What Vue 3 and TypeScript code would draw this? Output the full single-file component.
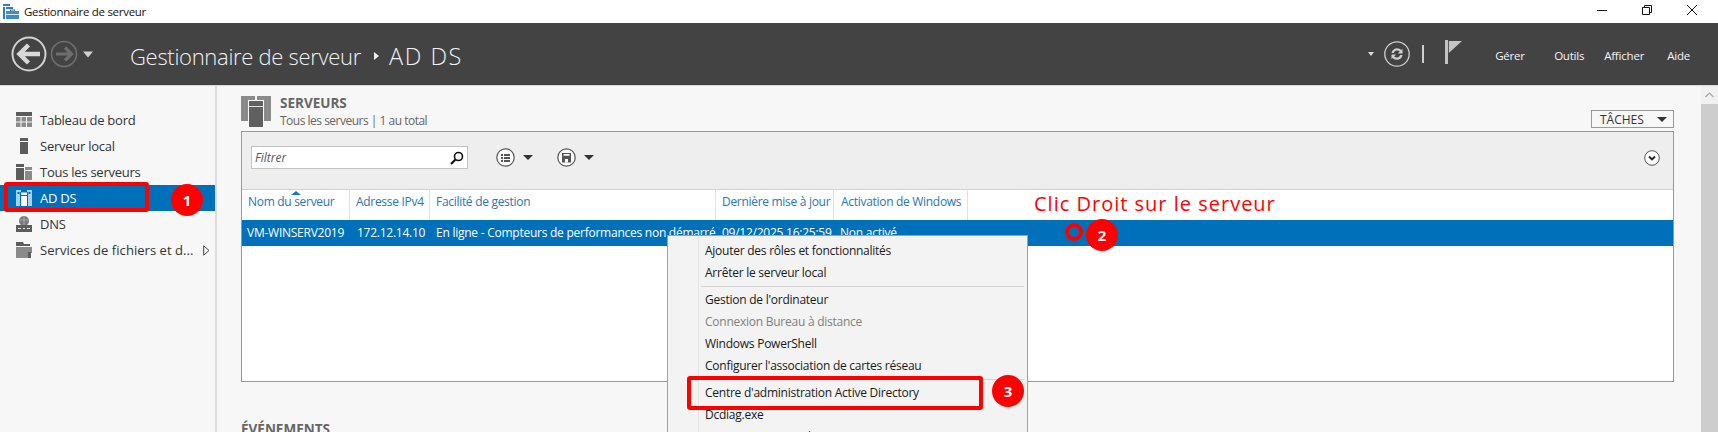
<script setup lang="ts">
const navItems = [
  { label: 'Tableau de bord', icon: 'grid' },
  { label: 'Serveur local', icon: 'one' },
  { label: 'Tous les serveurs', icon: 'all' },
  { label: 'AD DS', icon: 'ad', active: true },
  { label: 'DNS', icon: 'dns' },
  { label: 'Services de fichiers et d...', icon: 'files', more: true },
]
const columns = ['Nom du serveur', 'Adresse IPv4', 'Facilité de gestion', 'Dernière mise à jour', 'Activation de Windows']
const cells = ['VM-WINSERV2019', '172.12.14.10', 'En ligne - Compteurs de performances non démarré', '09/12/2025 16:25:59', 'Non activé']
const menuGroups = [
  [{ t: 'Ajouter des rôles et fonctionnalités' }, { t: 'Arrêter le serveur local' }],
  [
    { t: "Gestion de l'ordinateur" },
    { t: 'Connexion Bureau à distance', off: true },
    { t: 'Windows PowerShell' },
    { t: "Configurer l'association de cartes réseau" },
  ],
  [{ t: "Centre d'administration Active Directory" }, { t: 'Dcdiag.exe' }, { t: 'Domaines et approbations Active Directory' }],
]
const links = ['Gérer', 'Outils', 'Afficher', 'Aide']
</script>

<template>
  <div class="app">
    <div class="titlebar">
      <svg class="appicon" width="16" height="16" viewBox="0 0 16 16">
        <path d="M0 0h7v2H0zM0 3h2v12H0z" fill="#2b7cd3" />
        <path d="M3 3h7v2H3z" fill="#2b7cd3" />
        <path d="M3 7h13v8H3z" fill="#3f8fc5" />
        <path d="M7 5.5h5V7h-1v-.5H8V7H7z" fill="#5a6c7a" />
        <path d="M3 10h13v1H3z" fill="#dcebf5" />
      </svg>
      <span class="apptitle">Gestionnaire de serveur</span>
      <div class="winbtns">
        <svg width="10" height="10" viewBox="0 0 10 10"><path d="M0 5.5h10" stroke="#111" fill="none" /></svg>
        <svg width="10" height="10" viewBox="0 0 10 10"><path d="M.5 2.5h7v7h-7zM2.5 2.5v-2h7v7h-2" stroke="#111" fill="none" /></svg>
        <svg width="10" height="10" viewBox="0 0 10 10"><path d="M0 0l10 10M10 0L0 10" stroke="#111" fill="none" /></svg>
      </div>
    </div>

    <header class="header">
      <svg class="navbtns" width="84" height="38" viewBox="0 0 84 38">
        <circle cx="18" cy="19" r="16.5" fill="none" stroke="#d2d2d2" stroke-width="2" />
        <path d="M8 19h21M17.5 10L8.5 19l9 9" fill="none" stroke="#d8d8d8" stroke-width="4.5" />
        <circle cx="53" cy="19" r="12.5" fill="none" stroke="#6e6e6e" stroke-width="1.6" />
        <path d="M45 19h15M54 12.5l6.5 6.5-6.5 6.5" fill="none" stroke="#6e6e6e" stroke-width="3.2" />
        <path d="M72 16.5h10l-5 6z" fill="#d0d0d0" />
      </svg>
      <div class="crumb">
        <span class="crumb-a">Gestionnaire de serveur</span>
        <i class="crumbarrow"></i>
        <span class="crumb-b">AD DS</span>
      </div>
      <div class="headright">
        <i class="hdrop"></i>
        <svg width="26" height="26" viewBox="0 0 26 26">
          <circle cx="13" cy="13" r="12.2" fill="none" stroke="#cfcfcf" stroke-width="1.3" />
          <path d="M7.5 12a5.7 5.7 0 0 1 9.8-3l1.2-1.2v4.6h-4.6l1.8-1.8a3.5 3.5 0 0 0-5.9 1.4zM18.5 14a5.7 5.7 0 0 1-9.8 3l-1.2 1.2v-4.6h4.6l-1.8 1.8a3.5 3.5 0 0 0 5.9-1.4z" fill="#cfcfcf" />
        </svg>
        <i class="hsep"></i>
        <svg class="flag" width="18" height="24" viewBox="0 0 18 24">
          <path d="M0 0h3v24H0z" fill="#c4c4c4" />
          <path d="M3.8 1H17l-13.200 12z" fill="#c4c4c4" />
        </svg>
        <nav class="links">
          <a v-for="l in links" :key="l" class="link">{{ l }}</a>
        </nav>
      </div>
    </header>

    <div class="body">
      <aside class="side">
        <div v-for="n in navItems" :key="n.label" class="nav" :class="{ active: n.active, wide: n.more }">
          <svg class="navicon" width="16" height="16" viewBox="0 0 16 16">
            <template v-if="n.icon === 'grid'">
              <path d="M0 0h16v4H0z" fill="#5c5c5c" />
              <path d="M0 5h4.500v4.500H0zM5.500 5h4.500v4.500H5.500zM11 5h5v4.500h-5zM0 10.500h4.500V15H0zM5.500 10.500h4.500V15H5.500zM11 10.500h5V15h-5z" fill="#8a8a8a" />
            </template>
            <template v-else-if="n.icon === 'one'">
              <path d="M4 0h8v3H4z" fill="#5c5c5c" />
              <path d="M4 4h8v12H4z" fill="#5c5c5c" />
            </template>
            <template v-else-if="n.icon === 'all'">
              <path d="M0 0h8v3H0zM0 4h8v12H0z" fill="#5c5c5c" />
              <path d="M9 3h7v3H9zM9 7h7v9H9z" fill="#8a8a8a" />
            </template>
            <template v-else-if="n.icon === 'ad'">
              <path d="M0 0h5v16H0zM11 0h5v16h-5z" fill="#a9d0ea" />
              <path d="M1.500 2h2v2h-2zM12.500 2h2v2h-2z" fill="#0070bb" />
              <path d="M4 2h8v14H4z" fill="#0070bb" />
              <path d="M5 2.500h6v2.500H5zM5 6h6v10H5z" fill="#fff" />
            </template>
            <template v-else-if="n.icon === 'dns'">
              <circle cx="8" cy="5" r="5" fill="#7a7a7a" />
              <path d="M4 4h8M8 0v10" stroke="#b5b5b5" stroke-width=".8" />
              <path d="M0 9h16v7H0z" fill="#5c5c5c" />
              <path d="M2 12h3v1H2zM7 12h2v1H7zM11 12h3v1h-3z" fill="#e6e6e6" />
            </template>
            <template v-else>
              <path d="M0 0h7l1 2h6v2H0z" fill="#5c5c5c" />
              <path d="M0 5h16v11H0z" fill="#8a8a8a" />
              <path d="M12 11h5v6h-5z" fill="#f7f7f7" />
              <path d="M12 10h3v6h-3z" fill="#5c5c5c" />
            </template>
          </svg>
          <span class="navlabel">{{ n.label }}</span>
          <svg v-if="n.more" class="more" width="7" height="11" viewBox="0 0 7 11"><path d="M.7.8L6 5.500.7 10.200z" fill="none" stroke="#444" /></svg>
        </div>
      </aside>

      <main class="main">
        <section class="heading">
          <svg class="hicon" width="30" height="31" viewBox="0 0 30 31">
            <path d="M0 0h14v4H7v21H0zM16 0h14v25h-7V4h-7z" fill="#8a8a8a" />
            <path d="M7 4h16v1H7z" fill="#f7f7f7" />
            <path d="M8 5h14v26H8z" fill="#606060" />
            <path d="M8 10h14v1H8z" fill="#ddd" />
          </svg>
          <div class="headtext">
            <div class="h1">SERVEURS</div>
            <div class="h2">Tous les serveurs | 1 au total</div>
          </div>
          <button class="tasks"><span>TÂCHES</span><i class="tri"></i></button>
        </section>

        <section class="panel">
          <div class="toolbar">
            <div class="filter">
              <span>Filtrer</span>
              <svg width="14" height="14" viewBox="0 0 14 14">
                <circle cx="8.500" cy="5.500" r="4" fill="none" stroke="#111" stroke-width="1.600" />
                <path d="M5.500 8.500L1 13" stroke="#111" stroke-width="2.200" />
              </svg>
            </div>
            <div class="tool">
              <svg width="19" height="19" viewBox="0 0 19 19">
                <circle cx="9.500" cy="9.500" r="8.700" fill="#fff" stroke="#555" stroke-width="1.200" />
                <path d="M5 6h2v2H5zM8 6h6v2H8zM5 9h2v2H5zM8 9h6v2H8zM5 12h2v2H5zM8 12h6v2H8z" fill="#555" />
              </svg>
              <i class="tri big"></i>
            </div>
            <div class="tool">
              <svg width="19" height="19" viewBox="0 0 19 19">
                <circle cx="9.500" cy="9.500" r="8.700" fill="#fff" stroke="#555" stroke-width="1.200" />
                <path d="M5 5h9v9.500H5z" fill="#555" />
                <path d="M6.500 6h6v1.800h-6zM8 11h3v3.500H8z" fill="#fff" />
              </svg>
              <i class="tri big"></i>
            </div>
            <svg class="expand" width="16" height="16" viewBox="0 0 16 16">
              <circle cx="8" cy="8" r="7.300" fill="#fff" stroke="#555" />
              <path d="M5 6.500l3 3 3-3" fill="none" stroke="#222" stroke-width="1.800" />
            </svg>
          </div>
          <div class="thead">
            <div v-for="(c, i) in columns" :key="c" class="th" :class="'c' + i">
              <i v-if="i === 0" class="sort"></i>{{ c }}
            </div>
          </div>
          <div class="trow">
            <div v-for="(c, i) in cells" :key="c" class="td" :class="'c' + i">{{ c }}</div>
          </div>
          <div class="tempty"></div>
        </section>

        <div class="events">ÉVÉNEMENTS</div>
      </main>

      <div class="scroll">
        <div class="sarrow">
          <svg width="9" height="6" viewBox="0 0 9 6"><path d="M.5 5l4-4 4 4" fill="none" stroke="#a6a6a6" stroke-width="1.200" /></svg>
        </div>
        <div class="sthumb"></div>
      </div>
    </div>

    <div class="menu">
      <template v-for="(g, gi) in menuGroups" :key="gi">
        <div v-if="gi > 0" class="msep"></div>
        <div v-for="it in g" :key="it.t" class="mitem" :class="{ off: it.off }">{{ it.t }}</div>
      </template>
    </div>

    <div class="mark mark-ad"></div>
    <div class="mark mark-center"></div>
    <div class="ring"></div>
    <div class="badge b1">1</div>
    <div class="badge b2">2</div>
    <div class="badge b3">3</div>
    <div class="clic">Clic Droit sur le serveur</div>
  </div>
</template>

<style>
html, body { margin: 0; background: #fff; overflow: hidden; }
</style>

<style scoped>
.app {
  position: relative;
  width: 1718px;
  height: 432px;
  overflow: hidden;
  display: flex;
  flex-direction: column;
  font-family: "Open Sans", "Noto Sans", sans-serif;
  font-size: 12px;
  color: #222;
}
.titlebar { height: 23px; display: flex; align-items: center; background: #fff; flex: none; }
.appicon { margin: 0 5px 0 3px; }
.apptitle { font-size: 11.500px; color: #111; letter-spacing: -.3px; }
.winbtns { margin-left: auto; display: flex; gap: 35px; padding-right: 21px; margin-top: -3px; }
.header { height: 62px; background: #434343; display: flex; align-items: center; flex: none; padding-left: 11px; color: #fff; }
.navbtns { flex: none; }
.crumb { margin-left: 35px; margin-top: 3px; display: flex; align-items: center; font-weight: 300; color: #f2f2f2; }
.crumb-a { font-size: 22px; letter-spacing: -.3px; }
.crumb-b { font-size: 23.500px; letter-spacing: 1.500px; }
.crumbarrow { width: 0; height: 0; border-left: 5px solid #eee; border-top: 4px solid transparent; border-bottom: 4px solid transparent; margin: 0 10px 0 13px; }
.headright { margin-left: auto; display: flex; align-items: center; }
.hdrop { width: 0; height: 0; border-top: 4px solid #ddd; border-left: 3.500px solid transparent; border-right: 3.500px solid transparent; margin-right: 10px; }
.hsep { width: 2px; height: 18px; background: #cfcfcf; margin: 0 21px 0 12px; }
.flag { margin-top: -4px; }
.links { display: flex; margin-left: 32px; padding-right: 28px; margin-top: 2px; }
.link { font-size: 11.500px; color: #f4f4f4; letter-spacing: -.2px; }
.link:nth-child(1) { width: 59px; }
.link:nth-child(2) { width: 50px; }
.link:nth-child(3) { width: 63px; }
.body { flex: 1; min-height: 0; display: flex; background: #f7f7f7; border-top: 1px solid #d8d8d8; }
.side { flex: none; padding-top: 21px; box-sizing: border-box; border-right: 2px solid #dcdcdc; width: 217px; }
.nav { height: 26px; display: flex; align-items: center; padding-left: 16px; font-size: 13px; color: #333; letter-spacing: -.25px; }
.nav.wide { letter-spacing: .05px; }
.nav.active { background: #0070bb; color: #fff; }
.navicon { flex: none; margin-right: 8px; }
.navlabel { white-space: nowrap; }
.more { margin-left: auto; margin-right: 5px; }
.main { flex: 1; min-width: 0; padding: 8px 27px 0 24px; display: flex; flex-direction: column; }
.heading { display: flex; height: 37px; flex: none; position: relative; }
.hicon { margin-top: 2px; }
.headtext { margin-left: 9px; }
.h1 { font-weight: 700; font-size: 13.500px; color: #666; line-height: 18px; }
.h2 { font-size: 12px; color: #666; line-height: 15px; letter-spacing: -.5px; margin-top: 1px; }
.tasks { margin-left: auto; align-self: flex-end; height: 18px; width: 83px; box-sizing: border-box; border: 1px solid #999; background: #f7f7f7; display: flex; align-items: center; justify-content: space-between; padding: 0 6px 0 8px; font: inherit; font-size: 12px; color: #333; margin-bottom: 3px; }
.tri { display: block; width: 0; height: 0; border-top: 5px solid #333; border-left: 5px solid transparent; border-right: 5px solid transparent; }
.panel { height: 251px; box-sizing: border-box; border: 1px solid #999; background: #fff; flex: none; display: flex; flex-direction: column; }
.toolbar { height: 58px; flex: none; background: #eee; display: flex; align-items: center; padding: 0 0 6px 9px; box-sizing: border-box; border-bottom: 1px solid #d0d0d0; position: relative; }
.filter { width: 217px; height: 23px; box-sizing: border-box; border: 1px solid #c4c4c4; background: #fff; display: flex; align-items: center; justify-content: space-between; padding: 0 3px; font-style: italic; color: #555; }
.tool { display: flex; align-items: center; gap: 8px; }
.filter + .tool { margin-left: 28px; }
.tool + .tool { margin-left: 24px; }
.tri.big { border-top-width: 5px; }
.expand { margin-left: auto; margin-right: 13px; }
.thead, .trow { display: grid; grid-template-columns: 108px 80px 286px 118px 134px; flex: none; }
.thead { height: 30px; }
.th { position: relative; height: 30px; line-height: 22px; padding: 1px 0 0 6px; box-sizing: border-box; color: #2a75b3; border-right: 1px solid #e2e2e2; white-space: nowrap; letter-spacing: -.3px; }
.th.c4 { padding-left: 7px; }
.sort { position: absolute; left: 49px; top: 1px; width: 0; height: 0; border-bottom: 4px solid #1f76b8; border-left: 5px solid transparent; border-right: 5px solid transparent; }
.trow { height: 26px; background: #0070bb; color: #fff; grid-template-columns: 108px 80px 286px 118px 1fr; }
.td { line-height: 25px; padding-left: 6px; white-space: nowrap; letter-spacing: -.25px; }
.td.c0 { padding-left: 5px; }
.td.c1 { padding-left: 7px; }
.td.c2 { padding-left: 6px; }
.tempty { flex: 1; }
.events { margin-top: 38px; font-weight: 700; font-size: 13.500px; color: #666; line-height: 18px; }
.scroll { width: 17px; flex: none; background: #f1f1f1; display: flex; flex-direction: column; }
.sarrow { height: 18px; display: flex; align-items: center; justify-content: center; }
.sthumb { flex: 1; background: #cdcdcd; }
.menu { position: absolute; left: 667px; top: 235px; width: 361px; height: 220px; box-sizing: border-box; border: 1px solid #a0a0a0; background: linear-gradient(to right, #f3f3f3 30px, #e4e4e4 30px, #e4e4e4 31px, #f3f3f3 31px); padding-top: 4px; }
.mitem { height: 22px; line-height: 22px; padding-left: 37px; font-size: 12px; color: #1a1a1a; letter-spacing: -.25px; white-space: nowrap; }
.mitem.off { color: #808080; }
.msep { height: 1px; background: #d6d6d6; margin: 2px 3px 2px 33px; }
.mark { position: absolute; box-sizing: border-box; border: 4px solid #f00; border-radius: 3px; }
.mark-ad { left: 4px; top: 182px; width: 145px; height: 30px; }
.mark-center { left: 687px; top: 376px; width: 296px; height: 34px; }
.ring { position: absolute; left: 1065px; top: 223px; width: 18px; height: 18px; box-sizing: border-box; border: 4px solid #f00; border-radius: 50%; }
.badge { position: absolute; width: 32px; height: 32px; border-radius: 50%; background: #f00; color: #fff; font-weight: 700; font-size: 15px; line-height: 32px; text-align: center; }
.b1 { left: 171px; top: 184px; }
.b2 { left: 1086px; top: 219px; }
.b3 { left: 992px; top: 375px; }
.clic { position: absolute; left: 1034px; top: 191px; font-size: 20px; font-weight: 500; line-height: 26px; color: #f00; letter-spacing: 1px; white-space: nowrap; }
</style>
